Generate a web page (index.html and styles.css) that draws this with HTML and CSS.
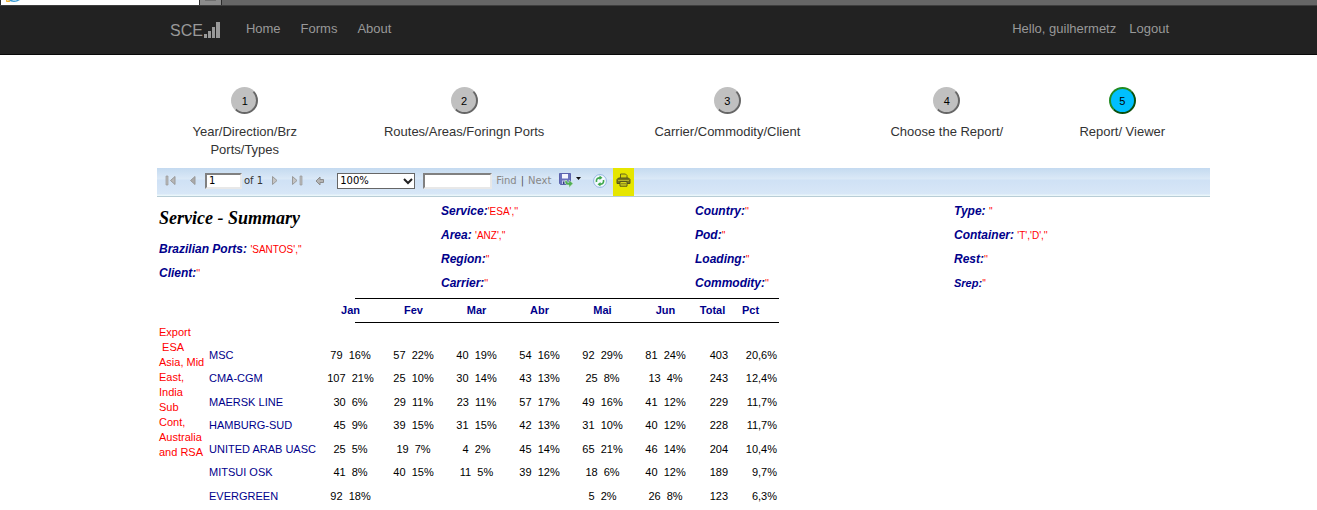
FILE: index.html
```html
<!DOCTYPE html>
<html lang="en">
<head>
<meta charset="utf-8">
<title>SCE - Report Viewer</title>
<link rel="stylesheet" href="styles.css">
</head>
<body>
<div class="tabstrip">
  <div class="tab tab-active">
    <svg width="16" height="5" viewBox="0 0 16 5"><path d="M2 0h12q-3 2-6 2T2 0" fill="#3b9bd4"/><path d="M6 0h5l-1 1H7z" fill="#9fd3f0"/><path d="M0 0q0 2 4 1" fill="none" stroke="#f0b030" stroke-width="1.5"/></svg>
  </div>
  <div class="tab tab-new"><span class="tab-mark"></span></div>
</div>
<header class="navbar">
  <a class="brand" href="#">SCE<svg width="16" height="16" viewBox="0 0 16 16" fill="#999"><path d="M0 12h3v4H0zM4 9h3v7H4zM8 5h3v11H8zM12 0h4v16h-4z"/></svg></a>
  <nav class="links">
    <a href="#">Home</a><a href="#">Forms</a><a href="#">About</a>
  </nav>
  <nav class="links account">
    <a href="#">Hello, guilhermetz</a><a href="#">Logout</a>
  </nav>
</header>
<main class="page">
  <div class="steps">
    <div class="step"><button class="dot" id="s1">1</button><label for="s1">Year/Direction/Brz Ports/Types</label></div>
    <div class="step"><button class="dot" id="s2">2</button><label for="s2">Routes/Areas/Foringn Ports</label></div>
    <div class="step"><button class="dot" id="s3">3</button><label for="s3">Carrier/Commodity/Client</label></div>
    <div class="step"><button class="dot" id="s4">4</button><label for="s4">Choose the Report/</label></div>
    <div class="step"><button class="dot dot-active" id="s5">5</button><label for="s5">Report/ Viewer</label></div>
  </div>

  <div class="toolbar">
    <div class="group pager">
      <button class="tool" aria-label="First page"><svg width="12" height="11" viewBox="0 0 12 11"><path d="M1 1h2v9H1z" fill="#bbb" stroke="#999" stroke-width=".7"/><path d="M10 1.500v8L5.500 5.500z" fill="#b8b8b8" stroke="#999"/></svg></button>
      <button class="tool" aria-label="Previous page"><svg width="8" height="11" viewBox="0 0 8 11"><path d="M6 1.500v8L1.500 5.500z" fill="#aaa" stroke="#999"/></svg></button>
      <input class="field page-no" type="text" value="1" aria-label="Current page">
      <span class="count">of 1</span>
      <button class="tool" aria-label="Next page"><svg width="8" height="11" viewBox="0 0 8 11"><path d="M1.500 1.500v8L6 5.500z" fill="#c4c4c4" stroke="#999"/></svg></button>
      <button class="tool last" aria-label="Last page"><svg width="12" height="11" viewBox="0 0 12 11"><path d="M1.500 1.500v8L6 5.500z" fill="#c4c4c4" stroke="#999"/><path d="M9 1h2v9H9z" fill="#bbb" stroke="#999" stroke-width=".7"/></svg></button>
      <button class="tool back" aria-label="Back"><svg width="10" height="10" viewBox="0 0 10 10"><path d="M5 1v2.500h3.500v3H5V9L1 5z" fill="#b4b4b4" stroke="#8c8c8c"/></svg></button>
    </div>
    <div class="zoom">
      <select class="zoom-select" aria-label="Zoom"><option>100%</option></select>
      <svg class="chevron" width="10" height="7" viewBox="0 0 10 7"><path d="M1 1l4 4 4-4" fill="none" stroke="#222" stroke-width="2"/></svg>
    </div>
    <input class="field find" type="text" aria-label="Find text">
    <div class="find-links"><a href="#">Find</a><span class="bar">|</span><a href="#">Next</a></div>
    <button class="tool save" aria-label="Export"><svg width="24" height="15" viewBox="0 0 24 15"><path d="M.5.500h11v11h-10l-1-1z" fill="#6a72bd" stroke="#5b63ad"/><path d="M3 1h6v4.500H3z" fill="#f4f6fd"/><path d="M3 7.500h5V11H3z" fill="#c7cdea"/><path d="M4 8.500h1.500V11H4z" fill="#333d80"/><path d="M6 7.500c0 3.500 1 4.500 4 4.500v2.500l4-4L10 7v2.500C8 9.500 8 9 8 7.500z" fill="#4fae54" stroke="#d9f0d9" stroke-width=".5"/><path d="M17 4h5l-2.500 3z" fill="#111"/></svg></button>
    <button class="tool refresh" aria-label="Refresh"><svg width="14" height="14" viewBox="0 0 14 14"><circle cx="7" cy="7" r="6.400" fill="#f4faff" stroke="#8aaede" stroke-width=".9"/><path d="M3.500 8C3 5 4.500 3.800 7 3.800" fill="none" stroke="#3da84c" stroke-width="1.700"/><path d="M6.500 1.500v4.600l3-2.300z" fill="#3da84c"/><path d="M10.500 6c.5 3-1 4.200-3.500 4.200" fill="none" stroke="#3da84c" stroke-width="1.700"/><path d="M7.500 7.900v4.600l-3-2.300z" fill="#3da84c"/></svg></button>
    <button class="tool print" aria-label="Print"><svg width="15" height="14" viewBox="0 0 15 14"><path d="M4.500 6V1h5l1.500 1.500V6" fill="#d8d80c" stroke="#66661a"/><path d="M1 6.500L2.500 5h10L14 6.500V10.500H1z" fill="#77771c" stroke="#55551a"/><path d="M2 7.500h11" stroke="#b4b42c"/><path d="M4 8.500h7v4.700H4z" fill="#d4d41c" stroke="#55551a"/><path d="M5 10.800h5" stroke="#77771c"/></svg></button>
  </div>

  <section class="report">
    <div class="params">
      <div class="col">
        <h1>Service - Summary</h1>
        <p><b>Brazilian Ports:</b> <span>'SANTOS',''</span></p>
        <p><b>Client:</b><span>''</span></p>
      </div>
      <div class="col">
        <p><b>Service:</b><span>'ESA',''</span></p>
        <p><b>Area:</b> <span>'ANZ',''</span></p>
        <p><b>Region:</b><span>''</span></p>
        <p><b>Carrier:</b><span>''</span></p>
      </div>
      <div class="col">
        <p><b>Country:</b><span>''</span></p>
        <p><b>Pod:</b><span>''</span></p>
        <p><b>Loading:</b><span>''</span></p>
        <p><b>Commodity:</b><span>''</span></p>
      </div>
      <div class="col">
        <p><b>Type:</b> <span>''</span></p>
        <p><b>Container:</b> <span>'T','D',''</span></p>
        <p><b>Rest:</b><span>''</span></p>
        <p class="small"><b>Srep:</b><span>''</span></p>
      </div>
    </div>

    <table class="data">
      <colgroup><col class="c-region"><col class="c-name"><col class="c-month" span="6"><col class="c-total"><col class="c-pct"></colgroup>
      <thead>
        <tr><td></td><td></td><th>Jan</th><th>Fev</th><th>Mar</th><th>Abr</th><th>Mai</th><th>Jun</th><th>Total</th><th class="pct-head">Pct</th></tr>
      </thead>
      <tbody>
        <tr class="spacer"><th class="region" rowspan="8">Export<br>&nbsp;ESA<br>Asia, Mid<br>East,<br>India<br>Sub<br>Cont,<br>Australia<br>and RSA</th><td colspan="9"></td></tr>
        <tr><th>MSC</th><td>79&nbsp; 16%</td><td>57&nbsp; 22%</td><td>40&nbsp; 19%</td><td>54&nbsp; 16%</td><td>92&nbsp; 29%</td><td>81&nbsp; 24%</td><td>403</td><td>20,6%</td></tr>
        <tr><th>CMA-CGM</th><td>107&nbsp; 21%</td><td>25&nbsp; 10%</td><td>30&nbsp; 14%</td><td>43&nbsp; 13%</td><td>25&nbsp; 8%</td><td>13&nbsp; 4%</td><td>243</td><td>12,4%</td></tr>
        <tr><th>MAERSK LINE</th><td>30&nbsp; 6%</td><td>29&nbsp; 11%</td><td>23&nbsp; 11%</td><td>57&nbsp; 17%</td><td>49&nbsp; 16%</td><td>41&nbsp; 12%</td><td>229</td><td>11,7%</td></tr>
        <tr><th>HAMBURG-SUD</th><td>45&nbsp; 9%</td><td>39&nbsp; 15%</td><td>31&nbsp; 15%</td><td>42&nbsp; 13%</td><td>31&nbsp; 10%</td><td>40&nbsp; 12%</td><td>228</td><td>11,7%</td></tr>
        <tr><th>UNITED ARAB UASC</th><td>25&nbsp; 5%</td><td>19&nbsp; 7%</td><td>4&nbsp; 2%</td><td>45&nbsp; 14%</td><td>65&nbsp; 21%</td><td>46&nbsp; 14%</td><td>204</td><td>10,4%</td></tr>
        <tr><th>MITSUI OSK</th><td>41&nbsp; 8%</td><td>40&nbsp; 15%</td><td>11&nbsp; 5%</td><td>39&nbsp; 12%</td><td>18&nbsp; 6%</td><td>40&nbsp; 12%</td><td>189</td><td>9,7%</td></tr>
        <tr><th>EVERGREEN</th><td>92&nbsp; 18%</td><td></td><td></td><td></td><td>5&nbsp; 2%</td><td>26&nbsp; 8%</td><td>123</td><td>6,3%</td></tr>
      </tbody>
    </table>
  </section>
</main>
</body>
</html>
```
FILE: styles.css
```css
* { box-sizing: border-box; }
body {
  margin: 0;
  background: #fff;
  color: #333;
  font: 13px/18px "Liberation Sans", Arial, sans-serif;
}
a { color: inherit; text-decoration: none; }
button { font: inherit; padding: 0; cursor: pointer; }

/* Browser tab strip */
.tabstrip {
  display: flex;
  height: 6px;
  background: #666;
  border-bottom: 1px solid #3e3e3e;
}
.tab { border-right: 1px solid #2b2b2b; }
.tab-active { width: 200px; padding-left: 5px; background: #fff; border-left: 1px solid #2b2b2b; }
.tab-active svg { display: block; }
.tab-new { width: 22px; background: #8c8c8c; }
.tab-mark { display: block; width: 11px; height: 1px; margin: 0 auto; background: #707070; }

/* Navigation */
.navbar {
  display: flex;
  align-items: center;
  height: 49px;
  padding: 0 148px 0 170px;
  background: #222;
  border-bottom: 1px solid #080808;
  color: #999;
}
.brand { display: flex; align-items: center; gap: 1px; padding-top: 2px; font-size: 16px; }
.brand svg { margin-bottom: 2px; }
.links { display: flex; gap: 20px; margin-left: 26px; padding-bottom: 2px; }
.account { gap: 13px; margin-left: auto; }

.page { padding: 0 107px 0 157px; }

/* Wizard steps */
.steps {
  display: grid;
  grid-template-columns: 2fr 3fr 3fr 2fr 2fr;
  padding: 32px 0 9px;
}
.step {
  display: flex;
  flex-direction: column;
  align-items: center;
  gap: 9px;
  padding: 0 14px;
  text-align: center;
}
.dot {
  width: 27px;
  height: 27px;
  border: 2px solid;
  border-color: #c0c0c0 #666 #666 #c0c0c0;
  border-radius: 50%;
  background: #c0c0c0;
  color: #000;
  font-size: 11px;
}
.dot-active { background: #00bfff; border-color: #228b22 #0b4f0b #0b4f0b #228b22; }

/* Report viewer toolbar */
.toolbar {
  display: flex;
  align-items: center;
  height: 29px;
  padding: 0 0 3px 8px;
  background: linear-gradient(#c4daf0 0, #dbe9f7 11px, #cfe1f5 12px, #d8e7f7 26px, #eaf6fa 27px);
  border-bottom: 1px solid #b8cdd6;
  color: #333;
  font: 10px/14px "DejaVu Sans", Verdana, sans-serif;
}
.group { display: flex; align-items: center; }
.tool { display: flex; align-items: center; border: 0; background: none; }
.field {
  height: 16px;
  padding: 0 2px;
  border: 2px solid;
  border-color: #808080 #e8e8e8 #e8e8e8 #808080;
  background: #fff;
  color: #000;
  font: inherit;
}
.pager .tool + .tool { margin-left: 12px; }
.page-no { width: 37px; margin-left: 8px; }
.count { margin: 0 8px 0 2px; }
.pager .last { margin-left: 11px; }
.zoom { position: relative; margin-left: 12px; }
.zoom-select {
  display: block;
  width: 78px;
  height: 16px;
  padding: 0 2px;
  border: 1px solid #666;
  border-radius: 0;
  appearance: none;
  background: #fff;
  color: #000;
  font: inherit;
}
.chevron { position: absolute; right: 2px; top: 5px; pointer-events: none; }
.find { width: 69px; margin-left: 8px; }
.find-links { display: flex; gap: 4px; margin-left: 4px; color: #888; }
.bar { color: #555; }
.save { margin-left: 8px; }
.refresh { margin-left: 10px; }
.print {
  align-self: flex-start;
  justify-content: center;
  width: 21px;
  height: 28px;
  margin-left: 6px;
  padding-bottom: 5px;
  background: #e6e600;
}

/* Report */
.report { padding-left: 2px; }
.params {
  display: grid;
  grid-template-columns: 282fr 254fr 259fr 256fr;
  padding: 2px 0 3px;
}
.params p { margin: 0; line-height: 24px; font-size: 12px; }
.params b { color: #00008b; font-style: italic; }
.params span { color: #f00; font-size: 10px; line-height: 12px; }
.params .small { font-size: 11px; }
.params h1 {
  margin: 0;
  color: #000;
  font: italic bold 18px/38px "Monotype Corsiva", "Liberation Serif", serif;
}

.data {
  width: 620px;
  table-layout: fixed;
  border-collapse: collapse;
  color: #000;
  font-size: 11px;
  line-height: 15px;
}
.c-region { width: 50px; }
.c-name { width: 110px; }
.c-month { width: 63px; }
.c-total { width: 31px; }
.c-pct { width: 51px; }
.data td, .data th { padding: 0; text-align: center; white-space: nowrap; }
.data thead tr {
  height: 25px;
  background:
    linear-gradient(#000, #000) right top / 424px 1px no-repeat,
    linear-gradient(#000, #000) right bottom / 424px 1px no-repeat;
}
.data thead th { color: #00008b; }
.data thead .pct-head { padding-left: 14px; text-align: left; }
.data tbody tr { height: 24px; }
.data tbody tr:nth-child(odd) { height: 23px; }
.data tbody .spacer, .data tbody .spacer:nth-child(odd) { height: 20px; }
.data tbody th { color: #00008b; font-weight: normal; text-align: left; }
.data tbody .region { padding-top: 2px; color: #f00; vertical-align: top; }
.data tbody td:nth-last-child(-n+2) { text-align: right; }
.data tbody td:last-child { padding-right: 2px; }
```
